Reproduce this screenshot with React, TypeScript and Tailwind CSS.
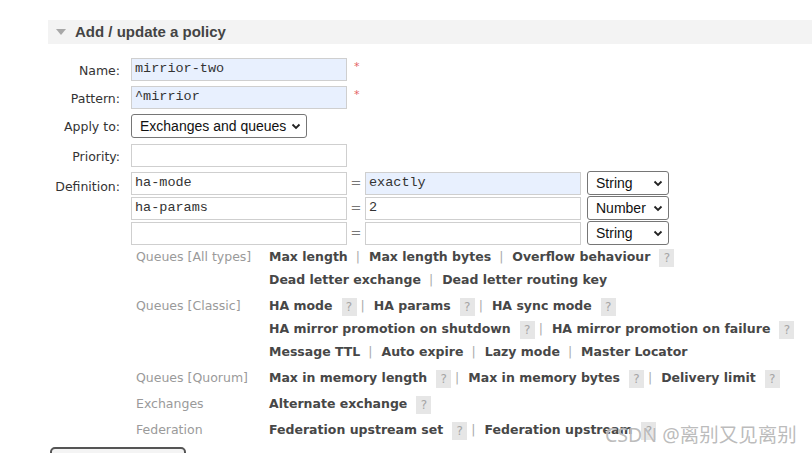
import React from 'react';

type Item = { text: string; help?: boolean };
type Group = { label: string; lines: Item[][] };

const groups: Group[] = [
  {
    label: 'Queues [All types]',
    lines: [
      [{ text: 'Max length' }, { text: 'Max length bytes' }, { text: 'Overflow behaviour', help: true }],
      [{ text: 'Dead letter exchange' }, { text: 'Dead letter routing key' }],
    ],
  },
  {
    label: 'Queues [Classic]',
    lines: [
      [
        { text: 'HA mode', help: true },
        { text: 'HA params', help: true },
        { text: 'HA sync mode', help: true },
      ],
      [
        { text: 'HA mirror promotion on shutdown', help: true },
        { text: 'HA mirror promotion on failure', help: true },
      ],
      [{ text: 'Message TTL' }, { text: 'Auto expire' }, { text: 'Lazy mode' }, { text: 'Master Locator' }],
    ],
  },
  {
    label: 'Queues [Quorum]',
    lines: [
      [
        { text: 'Max in memory length', help: true },
        { text: 'Max in memory bytes', help: true },
        { text: 'Delivery limit', help: true },
      ],
    ],
  },
  {
    label: 'Exchanges',
    lines: [[{ text: 'Alternate exchange', help: true }]],
  },
  {
    label: 'Federation',
    lines: [[{ text: 'Federation upstream set', help: true }, { text: 'Federation upstream', help: true }]],
  },
];

function Chevron() {
  return (
    <svg width="10" height="7" viewBox="0 0 10 7" className="shrink-0">
      <polyline points="1.5,1.5 5,5 8.5,1.5" fill="none" stroke="#222" strokeWidth="1.8" />
    </svg>
  );
}

function FakeSelect({ value, width }: { value: string; width: string }) {
  return (
    <div
      className={`${width} h-[24px] flex items-center justify-between pl-[8px] pr-[5px] border border-[#767676] rounded-[3px] bg-white text-[14px] text-[#111] font-['Liberation_Sans',sans-serif]`}
    >
      <span>{value}</span>
      <Chevron />
    </div>
  );
}

function TextBox({ value, filled }: { value?: string; filled?: boolean }) {
  return (
    <div
      className={`w-[216px] h-[23px] flex items-center pl-[3px] border border-[#cfcfcf] text-[13.5px] text-[#333] font-['Liberation_Mono',monospace] ${
        filled ? 'bg-[#e8f0fe]' : 'bg-white'
      }`}
    >
      {value}
    </div>
  );
}

function Label({ children, className = '' }: { children: React.ReactNode; className?: string }) {
  return <div className={`w-[72px] shrink-0 text-right text-[12.5px] text-[#333] ${className}`}>{children}</div>;
}

export default function App() {
  return (
    <div className="relative w-[812px] h-[453px] overflow-hidden bg-white font-['DejaVu_Sans',sans-serif]">
      <div className="pt-[20px] pl-[48px]">
        {/* Header */}
        <div className="h-[24px] bg-[#f3f3f3] flex items-center">
          <svg width="10" height="6" viewBox="0 0 10 6" className="ml-[8px]">
            <polygon points="0,0 10,0 5,6" fill="#a8a8a8" />
          </svg>
          <span className="ml-[9px] text-[15px] font-bold text-[#444] font-['Liberation_Sans',sans-serif]">
            Add / update a policy
          </span>
        </div>

        {/* Form */}
        <div className="mt-[14px] flex items-center">
          <Label className="pt-[3px]">Name:</Label>
          <div className="ml-[11px] flex">
            <TextBox value="mirrior-two" filled />
            <span className="ml-[7px] text-[11px] text-[#e46464] leading-none mt-[3px]">*</span>
          </div>
        </div>
        <div className="mt-[5px] flex items-center">
          <Label className="pt-[3px]">Pattern:</Label>
          <div className="ml-[11px] flex">
            <TextBox value="^mirrior" filled />
            <span className="ml-[7px] text-[11px] text-[#e46464] leading-none mt-[3px]">*</span>
          </div>
        </div>
        <div className="mt-[5px] flex items-center">
          <Label className="pt-[3px]">Apply to:</Label>
          <div className="ml-[11px]">
            <FakeSelect value="Exchanges and queues" width="w-[176px]" />
          </div>
        </div>
        <div className="mt-[6px] flex items-center">
          <Label className="pt-[3px]">Priority:</Label>
          <div className="ml-[11px]">
            <TextBox />
          </div>
        </div>
        <div className="mt-[4px] flex items-start">
          <Label className="pt-[7px]">Definition:</Label>
          <div className="ml-[11px] flex flex-col gap-[1px]">
            {[
              { k: 'ha-mode', v: 'exactly', t: 'String', f: true },
              { k: 'ha-params', v: '2', t: 'Number', f: false },
              { k: '', v: '', t: 'String', f: false },
            ].map((r, i) => (
              <div key={i} className="flex items-center">
                <TextBox value={r.k} />
                <span className="w-[18px] text-center text-[13px] text-[#777]">=</span>
                <TextBox value={r.v} filled={r.f} />
                <div className="ml-[6px]">
                  <FakeSelect value={r.t} width="w-[82px]" />
                </div>
              </div>
            ))}
          </div>
        </div>

        {/* Help links */}
        <div className="mt-[1px] pl-[83px] flex flex-col gap-[3px]">
          {groups.map((g) => (
            <div key={g.label} className="flex">
              <div className="w-[138px] shrink-0 pl-[5px] h-[22px] flex items-center text-[12.5px] text-[#9a9a9a]">
                {g.label}
              </div>
              <div className="flex flex-col">
                {g.lines.map((line, li) => (
                  <div
                    key={li}
                    className="h-[23px] flex items-center text-[12.5px] font-bold text-[#474747] whitespace-nowrap"
                  >
                    {line.map((it, ii) => (
                      <React.Fragment key={ii}>
                        {ii > 0 && (
                          <span
                            className={`${
                              line[ii - 1].help ? 'ml-[4px]' : 'ml-[8px]'
                            } mr-[9px] font-normal text-[#aaa]`}
                          >
                            |
                          </span>
                        )}
                        <span>{it.text}</span>
                        {it.help && (
                          <span className="ml-[9px] w-[15px] h-[18px] flex items-center justify-center bg-[#e6e6e6] text-[12px] font-normal text-[#a5a5a5]">
                            ?
                          </span>
                        )}
                      </React.Fragment>
                    ))}
                  </div>
                ))}
              </div>
            </div>
          ))}
        </div>

        <div className="mt-[5px] ml-[2px] w-[136px] h-[20px] rounded-[5px] border-2 border-[#555] bg-[#f4f4f4]" />
      </div>

      {/* Watermark */}
      <div className="absolute left-[605px] top-[420px] text-[19.5px] text-[#9a9a9aaa] font-['Noto_Sans','Noto_Sans_CJK_SC',sans-serif] [text-shadow:0_0_1px_#ffffff]">
        CSDN @离别又见离别
      </div>
    </div>
  );
}
